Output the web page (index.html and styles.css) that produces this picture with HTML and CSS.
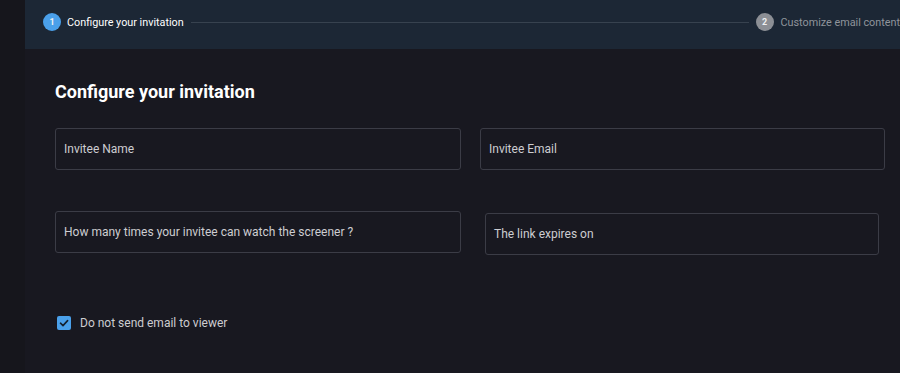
FILE: index.html
```html
<!DOCTYPE html>
<html lang="en">
<head>
    <meta charset="UTF-8">
    <title>Invite viewer</title>
    <link rel="stylesheet" href="styles.css">
</head>
<body>
    <div class="side"></div>
    <div class="page">
        <div class="stepper">
            <div class="step active">
                <span class="step-num">1</span>
                <span class="step-label">Configure your invitation</span>
            </div>
            <div class="step-line"></div>
            <div class="step">
                <span class="step-num">2</span>
                <span class="step-label">Customize email content</span>
            </div>
        </div>
        <div class="content">
            <h1>Configure your invitation</h1>
            <div class="fields">
                <div class="field">Invitee Name</div>
                <div class="field">Invitee Email</div>
                <div class="field">How many times your invitee can watch the screener ?</div>
                <div class="field-wrap">
                    <div class="field">The link expires on</div>
                </div>
            </div>
            <label class="check">
                <span class="check-box">
                    <svg width="10" height="10" viewBox="0 0 10 10"><path d="M1.5 5.2 L4 7.6 L8.6 2.6" fill="none" stroke="#14202e" stroke-width="1.6" stroke-linecap="round" stroke-linejoin="round"/></svg>
                </span>
                Do not send email to viewer
            </label>
        </div>
    </div>
</body>
</html>
```
FILE: styles.css
```css
html, body {
    margin: 0;
    height: 100%;
    overflow: hidden;
}
body {
    display: flex;
    background: #181820;
    font-family: Roboto, "Liberation Sans", sans-serif;
    color: #cdcdd1;
}
.side {
    width: 25px;
    flex: none;
    background: #16161c;
}
.page {
    flex: 1;
    min-width: 0;
}
.stepper {
    height: 49px;
    background: #1c2735;
    display: flex;
    align-items: center;
    padding: 0 0 5px 18px;
    box-sizing: border-box;
    white-space: nowrap;
}
.step {
    display: flex;
    align-items: center;
    gap: 6px;
    font-size: 10.8px;
    color: #8f949b;
}
.step + .step-line + .step {
    gap: 7px;
}
.step.active {
    color: #ffffff;
}
.step-num {
    width: 18px;
    height: 18px;
    border-radius: 50%;
    background: #8c8f95;
    color: #eef0f2;
    font-size: 9px;
    font-weight: 700;
    display: flex;
    align-items: center;
    justify-content: center;
}
.step.active .step-num {
    background: #4aa0ea;
}
.step-line {
    flex: 1;
    height: 1px;
    background: #37424f;
    margin: 0 7px;
}
.content {
    padding: 32px 0 0 30px;
}
h1 {
    margin: 0 0 25px;
    font-size: 18px;
    line-height: 22px;
    font-weight: 700;
    color: #ffffff;
}
.fields {
    display: grid;
    grid-template-columns: 406px 405px;
    column-gap: 19px;
    row-gap: 41px;
}
.field {
    height: 42px;
    box-sizing: border-box;
    border: 1px solid #3b3c46;
    border-radius: 3px;
    padding: 0 8px;
    display: flex;
    align-items: center;
    font-size: 12px;
    color: #cdcdd1;
}
.field-wrap {
    padding: 2px 6px 0 5px;
}
.check {
    display: flex;
    align-items: center;
    gap: 9px;
    margin: 61px 0 0 2px;
    font-size: 12px;
    color: #cdcdd1;
}
.check-box {
    width: 14px;
    height: 14px;
    box-sizing: border-box;
    border-radius: 2px;
    background: #4aa0ea;
    display: flex;
    align-items: center;
    justify-content: center;
}
```
